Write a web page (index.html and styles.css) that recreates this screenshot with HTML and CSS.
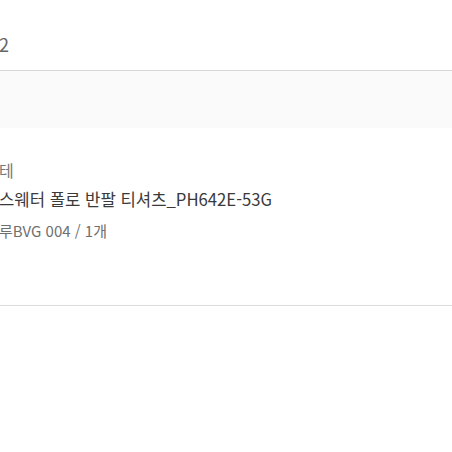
FILE: index.html
```html
<!DOCTYPE html>
<html lang="ko">

<head>
  <meta charset="UTF-8" />
  <meta name="viewport" content="width=device-width, initial-scale=1.0" />
  <title>주문 상세</title>
  <link rel="stylesheet" href="styles.css">
</head>

<body>
  <!-- Order header -->
  <div class="order-head">
    <span class="order-no">2</span>
  </div>

  <!-- Gray spacer band -->
  <div class="band"></div>

  <!-- Product row -->
  <div class="product">
    <div class="product-info">
      <p class="brand">테</p>
      <p class="name">스웨터 폴로 반팔 티셔츠_PH642E-53G</p>
      <p class="option">루BVG 004 / 1개</p>
    </div>
  </div>

  <div class="after"></div>
</body>

</html>
```

FILE: styles.css
```css
/* Basic page styling */
body {
  margin: 0;
  font-family: "Noto Sans CJK KR", "Noto Sans", sans-serif;
  background-color: #fff;
  color: #333;
}

p {
  margin: 0;
}

/* Order header */
.order-head {
  height: 71px;
  border-bottom: 1px solid #d6d6d6;
  box-sizing: border-box;
  padding-top: 33px;
}

.order-no {
  font-size: 18px;
  line-height: 22px;
  color: #666;
  margin-left: -1px;
}

/* Gray band */
.band {
  height: 57px;
  background-color: #fafafa;
}

/* Product row */
.product {
  height: 178px;
  border-bottom: 1px solid #dcdcdc;
  box-sizing: border-box;
  padding-top: 31px;
}

.product-info {
  margin-left: -1px;
}

.brand {
  font-size: 16px;
  line-height: 22px;
  color: #777;
}

.name {
  font-size: 16.7px;
  line-height: 22px;
  margin-top: 7px;
  color: #3a3a3a;
}

.option {
  font-size: 15px;
  line-height: 20px;
  margin-top: 11px;
  color: #6f6f6f;
}
```
